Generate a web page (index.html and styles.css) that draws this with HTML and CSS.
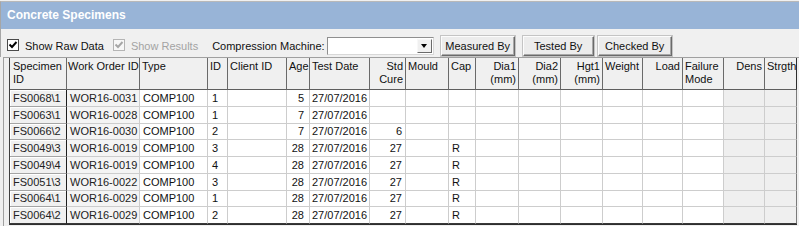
FILE: index.html
```html
<!DOCTYPE html>
<html>
<head>
<meta charset="utf-8">
<title>Concrete Specimens</title>
<link rel="stylesheet" href="styles.css">
</head>
<body>
<div class="window">
  <div class="head">
    <div class="title">Concrete Specimens</div>
    <div class="toolbar">
      <label class="check"><span class="box"><svg viewBox="0 0 10 10" width="10" height="10"><polyline points="1.5,4.5 4,7 8.5,2" fill="none" stroke="#000" stroke-width="1.9"/></svg></span><span>Show Raw Data</span></label>
      <label class="check dis"><span class="box"><svg viewBox="0 0 10 10" width="10" height="10"><polyline points="1.5,4.5 4,7 8.5,2" fill="none" stroke="#a6a6a6" stroke-width="1.9"/></svg></span><span>Show Results</span></label>
      <span class="lbl">Compression Machine:</span>
      <div class="combo"><span class="drop"><span class="tri"></span></span></div>
      <button class="btn b-measured">Measured By</button>
      <button class="btn b-tested">Tested By</button>
      <button class="btn b-checked">Checked By</button>
    </div>
  </div>
  <div class="sheet">
    <div class="grid">
      <div class="h">Specimen ID</div><div class="h nw">Work Order ID</div><div class="h">Type</div><div class="h">ID</div><div class="h">Client ID</div><div class="h r">Age</div><div class="h">Test Date</div><div class="h r">Std Cure</div><div class="h">Mould</div><div class="h">Cap</div><div class="h r">Dia1 (mm)</div><div class="h r">Dia2 (mm)</div><div class="h r">Hgt1 (mm)</div><div class="h">Weight</div><div class="h r">Load</div><div class="h">Failure Mode</div><div class="h r">Dens</div><div class="h last">Strgth</div>

      <div class="c key">FS0068\1</div><div class="c ro">WOR16-0031</div><div class="c">COMP100</div><div class="c n">1</div><div class="c"></div><div class="c r age">5</div><div class="c date">27/07/2016</div><div class="c r"></div><div class="c"></div><div class="c"></div><div class="c"></div><div class="c"></div><div class="c"></div><div class="c"></div><div class="c"></div><div class="c"></div><div class="c dim"></div><div class="c dim last"></div>

      <div class="c key">FS0063\1</div><div class="c ro">WOR16-0028</div><div class="c">COMP100</div><div class="c n">1</div><div class="c"></div><div class="c r age">7</div><div class="c date">27/07/2016</div><div class="c r"></div><div class="c"></div><div class="c"></div><div class="c"></div><div class="c"></div><div class="c"></div><div class="c"></div><div class="c"></div><div class="c"></div><div class="c dim"></div><div class="c dim last"></div>

      <div class="c key">FS0066\2</div><div class="c ro">WOR16-0030</div><div class="c">COMP100</div><div class="c n">2</div><div class="c"></div><div class="c r age">7</div><div class="c date">27/07/2016</div><div class="c r">6</div><div class="c"></div><div class="c"></div><div class="c"></div><div class="c"></div><div class="c"></div><div class="c"></div><div class="c"></div><div class="c"></div><div class="c dim"></div><div class="c dim last"></div>

      <div class="c key">FS0049\3</div><div class="c ro">WOR16-0019</div><div class="c">COMP100</div><div class="c n">3</div><div class="c"></div><div class="c r age">28</div><div class="c date">27/07/2016</div><div class="c r">27</div><div class="c"></div><div class="c">R</div><div class="c"></div><div class="c"></div><div class="c"></div><div class="c"></div><div class="c"></div><div class="c"></div><div class="c dim"></div><div class="c dim last"></div>

      <div class="c key">FS0049\4</div><div class="c ro">WOR16-0019</div><div class="c">COMP100</div><div class="c n">4</div><div class="c"></div><div class="c r age">28</div><div class="c date">27/07/2016</div><div class="c r">27</div><div class="c"></div><div class="c">R</div><div class="c"></div><div class="c"></div><div class="c"></div><div class="c"></div><div class="c"></div><div class="c"></div><div class="c dim"></div><div class="c dim last"></div>

      <div class="c key">FS0051\3</div><div class="c ro">WOR16-0022</div><div class="c">COMP100</div><div class="c n">3</div><div class="c"></div><div class="c r age">28</div><div class="c date">27/07/2016</div><div class="c r">27</div><div class="c"></div><div class="c">R</div><div class="c"></div><div class="c"></div><div class="c"></div><div class="c"></div><div class="c"></div><div class="c"></div><div class="c dim"></div><div class="c dim last"></div>

      <div class="c key">FS0064\1</div><div class="c ro">WOR16-0029</div><div class="c">COMP100</div><div class="c n">1</div><div class="c"></div><div class="c r age">28</div><div class="c date">27/07/2016</div><div class="c r">27</div><div class="c"></div><div class="c">R</div><div class="c"></div><div class="c"></div><div class="c"></div><div class="c"></div><div class="c"></div><div class="c"></div><div class="c dim"></div><div class="c dim last"></div>

      <div class="c key">FS0064\2</div><div class="c ro">WOR16-0029</div><div class="c">COMP100</div><div class="c n">2</div><div class="c"></div><div class="c r age">28</div><div class="c date">27/07/2016</div><div class="c r">27</div><div class="c"></div><div class="c">R</div><div class="c"></div><div class="c"></div><div class="c"></div><div class="c"></div><div class="c"></div><div class="c"></div><div class="c dim"></div><div class="c dim last"></div>
    </div>
  </div>
</div>
</body>
</html>
```

FILE: styles.css
```css
* { box-sizing: border-box; }

html, body {
  margin: 0;
  padding: 0;
  background: #f0f0f0;
  overflow: hidden;
}

body {
  font-family: "Liberation Sans", Arial, sans-serif;
  font-size: 11px;
  color: #111;
}

.window {
  padding-top: 1px;
}

.head {
  border-left: 1px solid #a6a6a6;
  border-top: 1px solid #b8b8b8;
}

.title {
  height: 27px;
  background: #98b4d7;
  color: #fff;
  font-weight: bold;
  font-size: 12px;
  line-height: 27px;
  padding-left: 6px;
}

.toolbar {
  display: flex;
  align-items: center;
  height: 28px;
  padding: 6px 0 1px 6px;
}

.check {
  display: flex;
  align-items: center;
}

.box {
  width: 12px;
  height: 12px;
  border: 1px solid #4a4a4a;
  background: #fff;
  margin-right: 6px;
  margin-top: -2px;
  display: flex;
  align-items: center;
  justify-content: center;
}

.box svg { display: block; }

.check.dis {
  margin-left: 9px;
  color: #a3a3a3;
}

.check.dis .box {
  border-color: #b4b4b4;
  background: #f7f7f7;
}

.lbl {
  margin-left: 14px;
}

.combo {
  margin-left: 2px;
  width: 107px;
  height: 18px;
  background: #fff;
  border: 1px solid #8f8f8f;
  border-right-color: #d8d8d8;
  border-bottom-color: #d8d8d8;
  display: flex;
  justify-content: flex-end;
  padding: 1px;
}

.drop {
  width: 15px;
  height: 100%;
  background: #f0f0f0;
  border: 1px solid #f8f8f8;
  border-right-color: #6a6a6a;
  border-bottom-color: #6a6a6a;
  display: flex;
  align-items: center;
  justify-content: center;
}

.tri {
  width: 0;
  height: 0;
  border-left: 3.5px solid transparent;
  border-right: 3.5px solid transparent;
  border-top: 4px solid #000;
}

.btn {
  height: 20px;
  padding: 0;
  font-family: "Liberation Sans", Arial, sans-serif;
  font-size: 11px;
  color: #111;
  background: #ececec;
  border: 1px solid #fcfcfc;
  border-right-color: #6a6a6a;
  border-bottom-color: #6a6a6a;
  box-shadow: inset -1px -1px 0 #a8a8a8;
  outline: 1px solid #c4c4c4;
  outline-offset: 0;
}

.b-measured { margin-left: 7px; width: 74px; }
.b-tested { margin-left: 8px; width: 71px; }
.b-checked { margin-left: 4px; width: 74px; }

.sheet {
  margin-left: 3px;
  height: 169px;
  border-left: 1px solid #a0a0a0;
  border-top: 1px solid #a0a0a0;
  padding-left: 5px;
}

.grid {
  display: grid;
  width: max-content;
  grid-template-columns: 57px 73px 68px 20px 59px 23px 60px 36px 43px 27px 43px 42px 42px 40px 40px 41px 41px 32px;
  grid-template-rows: 32px repeat(8, 16.75px);
  border-left: 1px solid #404040;
  border-bottom: 1px solid #2e2e2e;
}

.h {
  background: #f0f0f0;
  border-right: 1px solid #6a6a6a;
  border-bottom: 1px solid #5e5e5e;
  padding: 2px 2px 0 2px;
  line-height: 13px;
  color: #111;
}

.h:first-child { padding-left: 3px; }

.h.nw { white-space: nowrap; padding-left: 1px; }

.h.r { text-align: right; padding-right: 2px; }

.h.last { border-right-color: #2e2e2e; }

.c {
  background: #fff;
  border-right: 1px solid #cdcdcd;
  border-bottom: 1px solid #cdcdcd;
  padding: 0 3px;
  display: flex;
  align-items: center;
  white-space: nowrap;
  color: #111;
}

.c.r { justify-content: flex-end; padding-right: 3px; }
.c.age { padding-right: 5px; }
.c.date { padding-left: 2px; }
.c.n { padding-left: 4px; }

.c.key {
  background: #f0f0f0;
  border-right-color: #1e1e1e;
  border-bottom-color: #a4a4a4;
  box-shadow: inset 1px 1px 0 #fff;
  color: #222;
}

.c.ro {
  background: #f4f4f4;
  color: #222;
}

.c.dim { background: #efefef; }

.c.last { border-right-color: #7a7a7a; }

.grid > .c:nth-last-child(-n+18) { border-bottom-color: #3a3a3a; }
```
